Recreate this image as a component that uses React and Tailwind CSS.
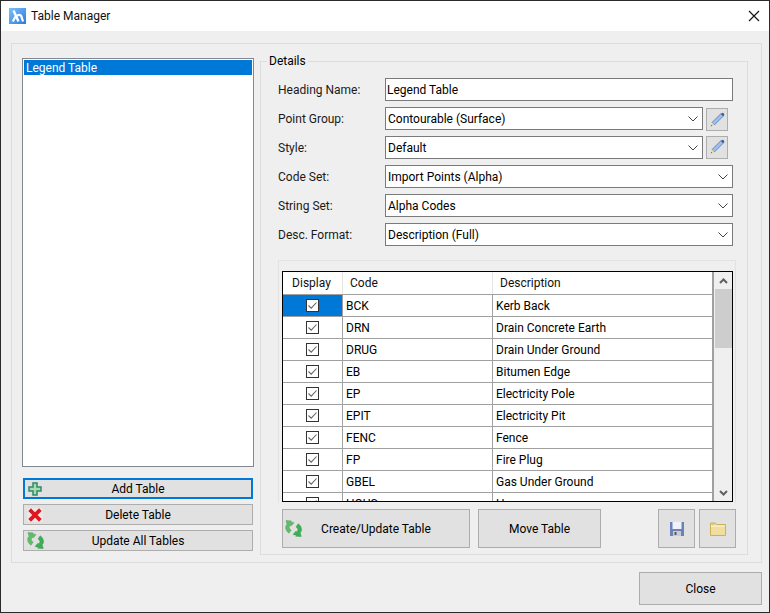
const rows = [
  ['BCK', 'Kerb Back'],
  ['DRN', 'Drain Concrete Earth'],
  ['DRUG', 'Drain Under Ground'],
  ['EB', 'Bitumen Edge'],
  ['EP', 'Electricity Pole'],
  ['EPIT', 'Electricity Pit'],
  ['FENC', 'Fence'],
  ['FP', 'Fire Plug'],
  ['GBEL', 'Gas Under Ground'],
  ['HOUS', 'House'],
];

const Logo = () => (
  <svg width="17" height="16" viewBox="0 0 17 16">
    <defs>
      <linearGradient id="logo" x1="0" y1="0" x2="1" y2="1">
        <stop offset="0" stopColor="#7cc0fa" />
        <stop offset="1" stopColor="#2a7be0" />
      </linearGradient>
    </defs>
    <rect width="17" height="16" fill="url(#logo)" />
    <path d="M4.500 2.500L9.500 13.500" fill="none" stroke="#fff" strokeWidth="2.400" />
    <path d="M6.800 8L3.800 13.500" fill="none" stroke="#fff" strokeWidth="2.200" />
    <path d="M7.500 8.200c1.500-1.700 4-1.700 4.800 0l1.700 5.300" fill="none" stroke="#fff" strokeWidth="2.200" />
  </svg>
);

const PlusIcon = () => (
  <svg width="14" height="14" viewBox="0 0 14 14">
    <path d="M5 1h4v4h4v4H9v4H5V9H1V5h4z" fill="#a9dca8" stroke="#2c8a70" strokeWidth="1.500" />
  </svg>
);

const CrossIcon = () => (
  <svg width="16" height="14" viewBox="0 0 16 14">
    <rect width="16" height="14" fill="#ece6e6" />
    <path d="M4 3l8 8M12 3l-8 8" stroke="#e0161e" strokeWidth="3.800" strokeLinecap="square" />
  </svg>
);

const RefreshIcon = () => (
  <svg width="17" height="17" viewBox="0 0 17 17">
    <path d="M1 0.500l5.500.5-1.200 1.400c1.300-.4 2.600-.3 3.700.3L6.600 5.600C5.500 5.100 4.200 5.900 4.300 7.500c.1 1 .8 2 1.900 2.600L4 13.200C1.800 11.700.5 9.500.7 7c.1-1 .5-2 1.300-2.700L1 .500z" fill="#62bb6a" stroke="#4aa558" strokeWidth="0.500" />
    <path d="M16.200 16.500l-5.500-.3 1.200-1.500c-1.300.4-2.600.3-3.700-.3l2.400-2.900c1.100.5 2.400-.3 2.300-1.900-.1-1-.8-2-1.900-2.600L13.200 3.800c2.200 1.500 3.500 3.700 3.300 6.200-.1 1-.5 2-1.300 2.700l1 3.800z" fill="#3fae55" stroke="#2f9a49" strokeWidth="0.500" />
  </svg>
);

const PencilIcon = () => (
  <svg width="16" height="16" viewBox="0 0 16 16">
    <path d="M3 10.500L11.800 1.800l2.400 2.400L5.400 13z" fill="#9dbfee" stroke="#5878b0" strokeWidth="0.800" />
    <path d="M11.800 1.800l2.400 2.400 1.100-1.300c.3-.6-1.300-2.300-2-2z" fill="#46598a" />
    <path d="M3 10.500l2.400 2.500-3.700 1.500z" fill="#e6d98f" />
    <path d="M2.300 12.900l.8.900-1.400.7z" fill="#444" />
  </svg>
);

const SaveIcon = () => (
  <svg width="14" height="14" viewBox="0 0 14 14">
    <path d="M0 0h14v14H0z" fill="#6a82b8" />
    <rect x="2.500" y="0" width="9" height="7" fill="#eef2fa" />
    <rect x="3" y="9" width="8" height="5" fill="#c9ccd4" />
    <rect x="4.500" y="10" width="2" height="3" fill="#5a5a5a" />
  </svg>
);

const FolderIcon = () => (
  <svg width="16" height="14" viewBox="0 0 16 14">
    <path d="M0.500 1h5l1 1.500h9v11h-15z" fill="#f1de9e" stroke="#cdb05a" />
    <path d="M1 3.500h14v1.500H1z" fill="#f8edc0" />
    <path d="M1.500 1.500h3v1h-3z" fill="#a4c765" />
  </svg>
);

const Chevron = () => (
  <svg width="10" height="6" viewBox="0 0 10 6" className="shrink-0">
    <path d="M0.500 0.500L5 5l4.500-4.500" fill="none" stroke="#444" strokeWidth="1" />
  </svg>
);

const Field = ({ label, children }) => (
  <div className="flex items-center h-[23px]">
    <div className="w-[107px] shrink-0 text-[#1a1a1a]">{label}</div>
    {children}
  </div>
);

const Combo = ({ value, width = 'w-[348px]' }) => (
  <div className={`${width} h-[23px] bg-white border border-[#7a7a7a] flex items-center justify-between pl-[2px] pr-[4px]`}>
    <span>{value}</span>
    <Chevron />
  </div>
);

const PencilButton = ({ className }) => (
  <button className={`${className} ml-[3px] w-[22px] h-[23px] bg-[#e1e1e1] border border-[#adadad] flex items-center justify-center`}>
    <PencilIcon />
  </button>
);

const SideButton = ({ icon, label, active }) => (
  <button className={`relative w-[230px] h-[21px] ml-px bg-[#e1e1e1] flex items-center justify-center ${active ? 'border-2 border-[#0078d7]' : 'border border-[#adadad]'}`}>
    <span className="absolute left-[3px] top-0 bottom-0 flex items-center">{icon}</span>
    {label}
  </button>
);

const Check = () => (
  <div className="w-[13px] h-[13px] bg-white border border-[#333] flex items-center justify-center">
    <svg width="11" height="11" viewBox="0 0 11 11">
      <path d="M1.500 5.500L4.200 8.200 9.500 2.500" fill="none" stroke="#666" strokeWidth="1.100" />
    </svg>
  </div>
);

const App = () => {
  return (
    <div className="w-[770px] h-[613px] border border-[#2a2a2a] flex flex-col bg-[#efefef] overflow-hidden text-[12px] leading-[16px] text-black font-['Roboto',sans-serif]">
      <div className="h-[30px] shrink-0 bg-white flex items-center pl-[8px] pr-[9px]">
        <Logo />
        <span className="ml-[5px] text-[#111]">Table Manager</span>
        <svg width="12" height="12" viewBox="0 0 12 12" className="ml-auto">
          <path d="M1 1l10 10M11 1L1 11" stroke="#111" strokeWidth="1.100" />
        </svg>
      </div>

      <div className="mt-[12px] ml-[10px] w-[751px] h-[520px] border border-[#dcdcdc] flex pl-[10px] pt-[9px]">
        <div className="w-[232px] shrink-0 mt-[5px] flex flex-col">
          <div className="h-[409px] bg-white border border-[#828790] p-px">
            <div className="h-[15px] bg-[#0078d7] text-white pl-[2px] leading-[17px]">Legend Table</div>
          </div>
          <div className="mt-[11px] flex flex-col gap-[5px]">
            <SideButton icon={<PlusIcon />} label="Add Table" active />
            <SideButton icon={<CrossIcon />} label="Delete Table" />
            <SideButton icon={<RefreshIcon />} label="Update All Tables" />
          </div>
        </div>

        <fieldset className="ml-[6px] w-[488px] h-[502px] border border-[#dcdcdc] pl-[17px] pt-[9px]">
          <legend className="-ml-[11px] px-[2px]">Details</legend>
          <div className="flex flex-col gap-[6px]">
            <Field label="Heading Name:">
              <div className="w-[348px] h-[23px] bg-white border border-[#7a7a7a] flex items-center pl-[1px]">Legend Table</div>
            </Field>
            <Field label="Point Group:">
              <Combo value="Contourable (Surface)" width="w-[318px]" />
              <PencilButton className="mt-[2px]" />
            </Field>
            <Field label="Style:">
              <Combo value="Default" width="w-[318px]" />
              <PencilButton className="-mt-px" />
            </Field>
            <Field label="Code Set:">
              <Combo value="Import Points (Alpha)" />
            </Field>
            <Field label="String Set:">
              <Combo value="Alpha Codes" />
            </Field>
            <Field label="Desc. Format:">
              <Combo value="Description (Full)" />
            </Field>
          </div>

          <div className="mt-[14px] w-[458px] h-[243px] border-t border-l border-r border-[#e2e2e2] pt-[10px] pl-[3px]">
            <div className="w-[451px] h-[231px] border border-black flex overflow-hidden bg-white">
              <div className="w-[431px] shrink-0 border-r-2 border-[#a0a0a0] overflow-hidden">
                <div className="flex h-[23px] border-b border-[#a0a0a0] text-[#111]">
                  <div className="w-[60px] flex items-center justify-center border-r border-[#e5e5e5] pr-[2px]">Display</div>
                  <div className="w-[150px] flex items-center pl-[7px] border-r border-[#e5e5e5]">Code</div>
                  <div className="flex-1 flex items-center pl-[7px]">Description</div>
                </div>
                {rows.map(([code, desc], i) => (
                  <div key={code} className="flex h-[22px] border-b border-[#a0a0a0]">
                    <div className={`w-[60px] flex items-center justify-center border-r border-[#a0a0a0] ${i === 0 ? 'bg-[#0078d7]' : ''}`}>
                      <Check />
                    </div>
                    <div className="w-[150px] flex items-center pl-[3px] border-r border-[#a0a0a0]">{code}</div>
                    <div className="flex-1 flex items-center pl-[3px]">{desc}</div>
                  </div>
                ))}
              </div>
              <div className="flex-1 bg-[#efefef] pl-px flex flex-col">
                <div className="h-[17px] flex items-center justify-center">
                  <svg width="9" height="6" viewBox="0 0 9 6">
                    <path d="M1 5l3.500-3.500L8 5" fill="none" stroke="#606060" strokeWidth="2" />
                  </svg>
                </div>
                <div className="h-[59px] bg-[#cdcdcd]"></div>
                <div className="mt-auto h-[17px] flex items-center justify-center">
                  <svg width="9" height="6" viewBox="0 0 9 6">
                    <path d="M1 1l3.500 3.500L8 1" fill="none" stroke="#606060" strokeWidth="2" />
                  </svg>
                </div>
              </div>
            </div>
          </div>

          <div className="mt-[6px] ml-[4px] flex h-[39px]">
            <button className="relative w-[188px] bg-[#e1e1e1] border border-[#adadad] flex items-center justify-center">
              <span className="absolute left-[2px] top-0 bottom-0 flex items-center"><RefreshIcon /></span>
              Create/Update Table
            </button>
            <button className="ml-[8px] w-[123px] bg-[#e1e1e1] border border-[#adadad] flex items-center justify-center">Move Table</button>
            <button className="ml-[57px] w-[37px] bg-[#e1e1e1] border border-[#adadad] flex items-center justify-center"><SaveIcon /></button>
            <button className="ml-[4px] w-[37px] bg-[#e1e1e1] border border-[#adadad] flex items-center justify-center"><FolderIcon /></button>
          </div>
        </fieldset>
      </div>

      <div className="mt-[9px] ml-[638px]">
        <button className="w-[123px] h-[33px] bg-[#e1e1e1] border border-[#adadad] flex items-center justify-center">Close</button>
      </div>
    </div>
  );
};

export default App;
